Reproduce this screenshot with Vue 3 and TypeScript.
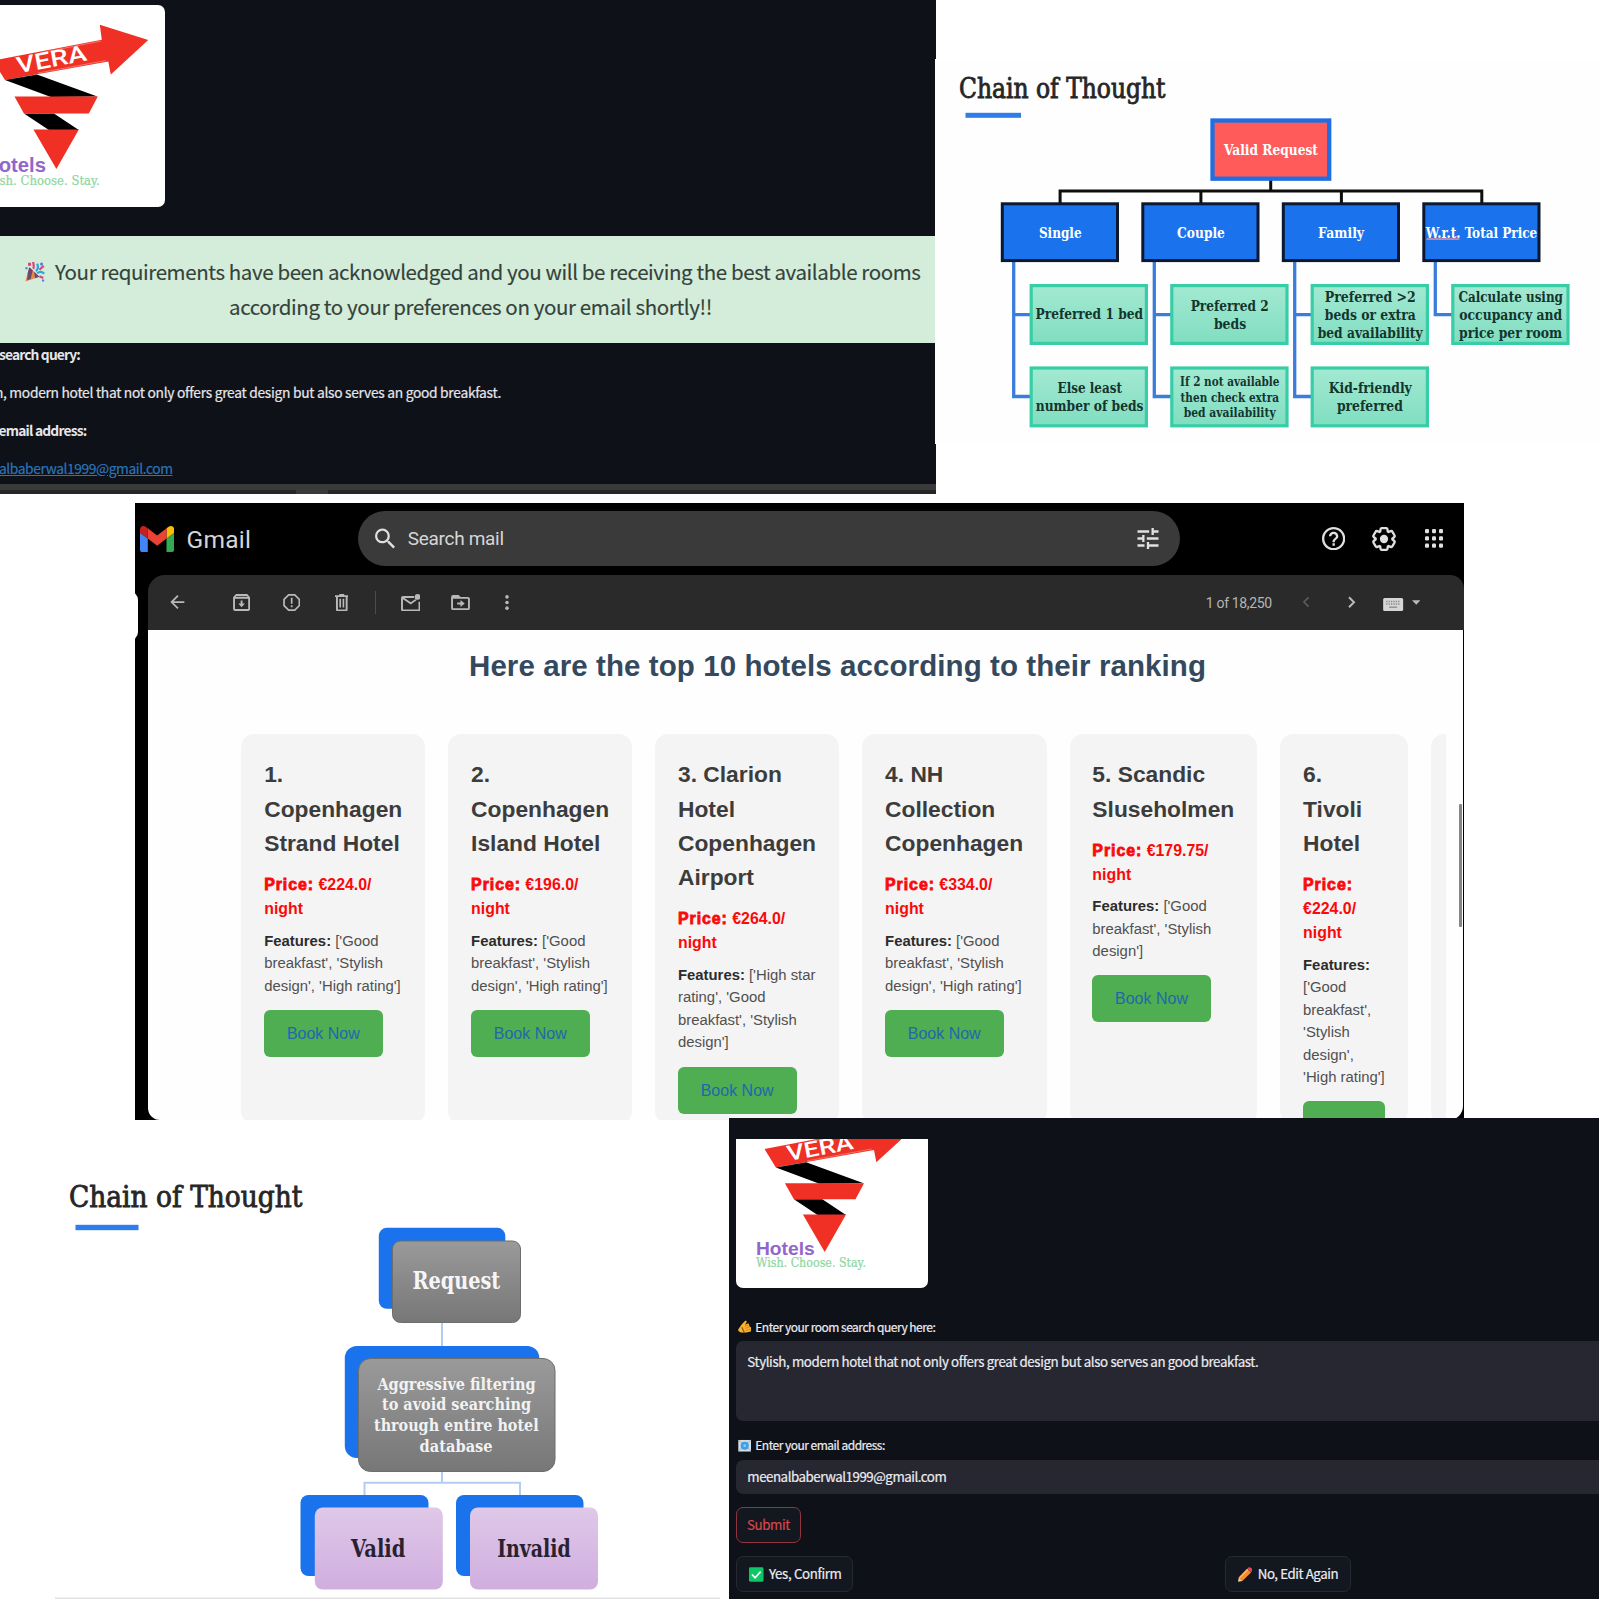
<script setup lang="ts">
interface Label { t: string; x: number; w: number; y: number; s?: number; c?: string }
interface Box { x: number; y: number; w: number; h: number }
interface Hotel { name: string; price: string; features: string; wide: number; action: string }

/* Spreads an element's letters so that the line takes a given width in pixels. */
const vFit = {
  mounted(el: HTMLElement, binding: { value: number }) {
    const count = (el.textContent ?? '').trim().length
    const natural = el.getBoundingClientRect().width
    el.style.letterSpacing = `${(binding.value - natural) / count}px`
  },
}

const hotels: Hotel[] = [
  { name: '1.\nCopenhagen\nStrand Hotel', price: ' €224.0/\nnight', features: " ['Good\nbreakfast', 'Stylish\ndesign', 'High rating']", wide: 183.9, action: 'Book Now' },
  { name: '2.\nCopenhagen\nIsland Hotel', price: ' €196.0/\nnight', features: " ['Good\nbreakfast', 'Stylish\ndesign', 'High rating']", wide: 183.9, action: 'Book Now' },
  { name: '3. Clarion\nHotel\nCopenhagen\nAirport', price: ' €264.0/\nnight', features: " ['High star\nrating', 'Good\nbreakfast', 'Stylish\ndesign']", wide: 184.1, action: 'Book Now' },
  { name: '4. NH\nCollection\nCopenhagen', price: ' €334.0/\nnight', features: " ['Good\nbreakfast', 'Stylish\ndesign', 'High rating']", wide: 184.3, action: 'Book Now' },
  { name: '5. Scandic\nSluseholmen', price: ' €179.75/\nnight', features: " ['Good\nbreakfast', 'Stylish\ndesign']", wide: 187.7, action: 'Book Now' },
  { name: '6.\nTivoli\nHotel', price: '\n€224.0/\nnight', features: "\n['Good\nbreakfast',\n'Stylish\ndesign',\n'High rating']", wide: 127.6, action: '' },
]

const categories: Box[] = [1000.500, 1141, 1281.500, 1422].map((x) => ({ x: x + 1.3, y: 203.8, w: 115.2, h: 56.8 }))
const rules: Box[] = [
  ...[1029, 1169.600, 1310, 1450.600].map((x) => ({ x: x + 1.7, y: 285.6, w: 115.2, h: 57.8 })),
  ...[1029, 1169.600, 1310].map((x) => ({ x: x + 1.7, y: 368, w: 115.2, h: 57.8 })),
]
const ink = '#14352e'
const ruleLabels: Label[] = [
  { t: 'Valid Request', x: 1223.5, w: 94, y: 155.2, c: '#fff' },
  { t: 'Single', x: 1038.4, w: 42.7, y: 237.6, c: '#fff' },
  { t: 'Couple', x: 1176.6, w: 47.8, y: 237.6, c: '#fff' },
  { t: 'Family', x: 1317.6, w: 46, y: 237.6, c: '#fff' },
  { t: 'W.r.t. Total Price', x: 1425.3, w: 111.5, y: 237.6, c: '#fff' },
  { t: 'Preferred 1 bed', x: 1035, w: 107.5, y: 319.2, c: ink },
  { t: 'Preferred 2', x: 1190.2, w: 78, y: 310.6, c: ink },
  { t: 'beds', x: 1213.4, w: 32.3, y: 328.6, c: ink },
  { t: 'Preferred >2', x: 1324.3, w: 91, y: 301.6, c: ink },
  { t: 'beds or extra', x: 1324.3, w: 91, y: 319.6, c: ink },
  { t: 'bed availability', x: 1317.2, w: 105, y: 337.6, c: ink },
  { t: 'Calculate using', x: 1458, w: 104.5, y: 301.6, c: ink },
  { t: 'occupancy and', x: 1458.8, w: 102.8, y: 319.6, c: ink },
  { t: 'price per room', x: 1458.6, w: 103, y: 337.6, c: ink },
  { t: 'Else least', x: 1057, w: 64.5, y: 393, c: ink },
  { t: 'number of beds', x: 1035.2, w: 107.8, y: 411, c: ink },
  { t: 'If 2 not available', x: 1179.6, w: 99.4, y: 386, s: 12.2, c: ink },
  { t: 'then check extra', x: 1180, w: 98.5, y: 401.6, s: 12.2, c: ink },
  { t: 'bed availability', x: 1183.2, w: 92, y: 417.2, s: 12.2, c: ink },
  { t: 'Kid-friendly', x: 1328.3, w: 83, y: 393, c: ink },
  { t: 'preferred', x: 1336.4, w: 66, y: 411, c: ink },
]

const filterLabels: Label[] = [
  { t: 'Request', x: 412.6, w: 87.6, y: 1288.6, s: 23.5, c: '#f6f6f6' },
  { t: 'Aggressive filtering', x: 377.4, w: 158.2, y: 1389.8, s: 16.5, c: '#f2f2f2' },
  { t: 'to avoid searching', x: 382, w: 149, y: 1410.4, s: 16.5, c: '#f2f2f2' },
  { t: 'through entire hotel', x: 374, w: 164.6, y: 1431, s: 16.5, c: '#f2f2f2' },
  { t: 'database', x: 419.6, w: 73, y: 1451.8, s: 16.5, c: '#f2f2f2' },
  { t: 'Valid', x: 351.1, w: 54.3, y: 1556.5, s: 24, c: '#2a2130' },
  { t: 'Invalid', x: 497.2, w: 73.5, y: 1556.5, s: 24, c: '#2a2130' },
]
</script>

<template>
  <main class="board">
    <svg class="defs" width="0" height="0" aria-hidden="true">
      <defs>
        <g id="vera-mark">
          <path fill="#f03024" d="M-7 60.500 102 39.500 100 24.500 148.500 40 111 74.500 108.500 61.500 5 80Z" />
          <path fill="#000" d="M5 80 37 74.500 97.500 96.500 51 97ZM24 113.500H54L79 130H49Z" />
          <path fill="#f03024" d="M14.500 96.500H98L89 113.500H24ZM33.500 129.500H79L56.500 169Z" />
          <path fill="none" stroke="#fff" stroke-width=".6" opacity=".55" d="M40 52.800 101 41M38 73 106 60.500" />
          <text class="vera" transform="translate(18 73.200) rotate(-10.500)" textLength="71" lengthAdjust="spacingAndGlyphs" font-size="22.500" fill="#fff">VERA</text>
          <text x="-16" y="172" textLength="62" lengthAdjust="spacingAndGlyphs" font-family="Liberation Sans, sans-serif" font-weight="700" font-size="20" fill="#9168c9">Hotels</text>
          <text x="-16" y="185.200" textLength="116" lengthAdjust="spacingAndGlyphs" font-family="DejaVu Serif, serif" font-size="13" fill="#8fd6a0" stroke="#8fd6a0" stroke-width=".25">Wish. Choose. Stay.</text>
        </g>
      </defs>
    </svg>

    <div class="top">
      <section class="ack">
        <svg class="logo-a" viewBox="0 5 165.5 201.5"><use href="#vera-mark" /></svg>
        <div class="banner">
          <div class="line">
            <svg class="party" viewBox="0 0 24 24">
              <path fill="#e8874a" d="M1 23.500 5.500 7 17 18z" />
              <path fill="#6b4a6e" d="M3.800 13 5.500 7l4 3.500L7 20.500l-4 1.500zM11 12l6 6-5 1.800z" />
              <path fill="none" stroke="#2aa7e0" stroke-width="2.600" d="M13 11.500c2.500-2 3-5 1.500-8.500M14.500 14c3-2.500 6-2 8 .5" />
              <path fill="none" stroke="#e0457b" stroke-width="2.600" d="M10 9c1.500-2.500 0-5 0-8M17 10l5-4.500M17 17.500l4.500 2" />
              <path fill="#e0457b" d="M4 2h3.500v3.500H4z" /><path fill="#4b7de0" d="M1 7h2.500v2.500H1zM18 2h3v3h-3zM20 21h2.500v2.500H20z" />
            </svg>
            <span v-fit="865.500">Your requirements have been acknowledged and you will be receiving the best available rooms</span>
          </div>
          <div class="line second"><span v-fit="483">according to your preferences on your email shortly!!</span></div>
        </div>
        <div class="facts">
          <div class="fact a"><b v-fit="81">search query:</b></div>
          <div class="fact b"><span v-fit="506">h, modern hotel that not only offers great design but also serves an good breakfast.</span></div>
          <div class="fact c"><b v-fit="88">email address:</b></div>
          <div class="fact d"><a v-fit="173.500">albaberwal1999@gmail.com</a></div>
        </div>
        <div class="taskbar"><i></i></div>
      </section>

      <svg class="slide-a" viewBox="934.5 59 664.5 385">
        <defs>
          <linearGradient id="mint" x1="0" y1="0" x2="0" y2="1"><stop offset="0" stop-color="#a3e9d2" /><stop offset="1" stop-color="#80dec0" /></linearGradient>
        </defs>
        <text x="958.500" y="98" textLength="206.500" lengthAdjust="spacingAndGlyphs" class="title" font-size="27">Chain of Thought</text>
        <rect x="965" y="112.800" width="55.500" height="5" fill="#2f7de8" />
        <path fill="none" stroke="#0d0d0d" stroke-width="3" d="M1270.200 180V191M1059.600 204V190.900H1481.300V204M1200.400 191V204M1340.900 191V204" />
        <path fill="none" stroke="#3b7ddd" stroke-width="3.300" d="M1013.200 260V396.500H1031M1013.200 314.700H1031M1153.800 260V396.500H1171M1153.800 314.700H1171M1294.200 260V396.500H1312M1294.200 314.700H1312M1434.800 260V314.700H1453" />
        <rect x="1212" y="120.500" width="116.700" height="58.200" fill="#ff5b5b" stroke="#1f6fe2" stroke-width="4.300" />
        <rect v-for="b in categories" :key="b.x" :x="b.x" :y="b.y" :width="b.w" :height="b.h" fill="#1a73ec" stroke="#0b1830" stroke-width="3" />
        <rect v-for="(b, i) in rules" :key="i" :x="b.x" :y="b.y" :width="b.w" :height="b.h" fill="url(#mint)" stroke="#37cda6" stroke-width="3.200" />
        <text v-for="(l, i) in ruleLabels" :key="'l' + i" class="label" :x="l.x" :y="l.y" :textLength="l.w" lengthAdjust="spacingAndGlyphs" :font-size="l.s ?? 14.8" :fill="l.c">{{ l.t }}</text>
        <rect x="1426" y="238.300" width="33" height="1.500" fill="#f08a9a" />
      </svg>
    </div>

    <section class="gmail">
      <i class="notch"></i>
      <header class="bar">
        <svg class="g-logo" viewBox="52 42 88 66" preserveAspectRatio="none">
          <path fill="#4285f4" d="M58 108h14V74L52 59v43c0 3.320 2.690 6 6 6" />
          <path fill="#34a853" d="M120 108h14c3.320 0 6-2.690 6-6V59l-20 15" />
          <path fill="#fbbc04" d="M120 48v26l20-15v-8c0-7.420-8.470-11.650-14.400-7.200" />
          <path fill="#ea4335" d="M72 74V48l24 18 24-18v26L96 92" />
          <path fill="#c5221f" d="M52 51v8l20 15V48l-5.600-4.200c-5.940-4.450-14.400-.22-14.400 7.200" />
        </svg>
        <div class="g-name"><span v-fit="64.500">Gmail</span></div>
        <div class="search">
          <svg class="ic-search" viewBox="3 3 17.5 17.5"><path d="M15.500 14h-.79l-.28-.27A6.470 6.470 0 0 0 16 9.500 6.500 6.500 0 1 0 9.500 16c1.610 0 3.090-.59 4.230-1.570l.27.28v.79l5 4.990L20.490 19l-4.990-5zm-6 0C7.010 14 5 11.990 5 9.500S7.010 5 9.500 5 14 7.010 14 9.500 11.990 14 9.500 14z" /></svg>
          <span v-fit="96" class="search-text">Search mail</span>
          <svg class="ic-tune" viewBox="3 3 18 18"><path d="M3 17v2h6v-2H3zM3 5v2h10V5H3zm10 16v-2h8v-2h-8v-2h-2v6h2zM7 9v2H3v2h4v2h2V9H7zm14 4v-2H11v2h10zm-6-4h2V7h4V5h-4V3h-2v6z" /></svg>
        </div>
        <svg class="ic-help" viewBox="2 2 20 20"><path d="M11 18h2v-2h-2v2zm1-16C6.480 2 2 6.480 2 12s4.480 10 10 10 10-4.480 10-10S17.520 2 12 2zm0 18c-4.410 0-8-3.590-8-8s3.590-8 8-8 8 3.590 8 8-3.590 8-8 8zm0-14c-2.210 0-4 1.790-4 4h2c0-1.100.9-2 2-2s2 .9 2 2c0 2-3 1.750-3 5h2c0-2.250 3-2.500 3-5 0-2.210-1.790-4-4-4z" /></svg>
        <svg class="ic-gear" viewBox="0.8 0.7 22.4 22.6"><path fill="none" stroke="#e0e0e0" stroke-width="2.200" d="M13.850 22.250h-3.700c-.74 0-1.360-.54-1.450-1.270l-.27-1.890c-.27-.14-.53-.29-.79-.46l-1.800.72c-.7.26-1.470-.03-1.810-.65L2.200 15.530c-.35-.66-.2-1.440.36-1.880l1.530-1.190c-.01-.15-.02-.3-.02-.46 0-.15.01-.31.02-.46l-1.520-1.190c-.59-.45-.74-1.260-.37-1.880l1.850-3.190c.34-.62 1.110-.9 1.790-.63l1.810.73c.26-.17.52-.32.78-.46l.27-1.910c.09-.7.71-1.250 1.440-1.250h3.700c.74 0 1.360.54 1.450 1.270l.27 1.890c.27.14.53.29.79.46l1.800-.72c.71-.26 1.480.03 1.820.65l1.840 3.180c.36.66.2 1.440-.36 1.880l-1.520 1.190c.01.15.02.3.02.46s-.01.31-.02.46l1.520 1.190c.56.45.72 1.230.37 1.860l-1.860 3.220c-.34.62-1.110.9-1.800.63l-1.800-.72c-.26.17-.52.32-.78.46l-.27 1.910c-.1.68-.72 1.220-1.460 1.220z" /><circle cx="12" cy="12" r="3.900" /></svg>
        <svg class="ic-apps" viewBox="0 0 18 19"><g v-for="r in 3" :key="r"><rect v-for="c in 3" :key="c" :x="(c - 1) * 7" :y="(r - 1) * 7.2" width="4" height="4.300" rx="1.200" /></g></svg>
      </header>

      <div class="tools">
        <svg class="t1" viewBox="4 4 16 16"><path d="M20 11H7.830l5.590-5.590L12 4l-8 8 8 8 1.410-1.410L7.830 13H20v-2z" /></svg>
        <svg class="t2" viewBox="0 0 18 18"><path fill-rule="evenodd" d="M3 0h12l3 3.500V16a2 2 0 0 1-2 2H2a2 2 0 0 1-2-2V3.500zM2 5v11h14V5zM8 7h2v3h2.500L9 14l-3.500-4H8zM3 2h12v1H3z" /></svg>
        <svg class="t3" viewBox="0 0 20 20"><path fill-rule="evenodd" d="M6 0h8l6 6v8l-6 6H6l-6-6V6zM6.800 2 2 6.800v6.400L6.800 18h6.400l4.800-4.800V6.800L13.200 2zM9 4.500h2v7H9zM9 13.200h2v2.300H9z" /></svg>
        <svg class="t4" viewBox="0 0 14 18"><path fill-rule="evenodd" d="M4.500 0h5v1.200H14v2h-1V16a2 2 0 0 1-2 2H3a2 2 0 0 1-2-2V3.200H0v-2h4.500zM3 3.200V16h8V3.200zM4.500 5h1.700v9H4.500zM7.800 5h1.700v9H7.800z" /></svg>
        <i class="sep"></i>
        <svg class="t5" viewBox="0 0 20 18"><path fill-rule="evenodd" d="M2 2h11.500a4 4 0 0 0 0 2H3.500L10 8.500l4.500-3 1.500 1-6 4.200-8-5.200V16h16V8h2v8a2 2 0 0 1-2 2H2a2 2 0 0 1-2-2V4a2 2 0 0 1 2-2z" /><circle cx="17" cy="3" r="3" /></svg>
        <svg class="t6" viewBox="0 0 20 16"><path fill-rule="evenodd" d="M2 0h6l2 2h8a2 2 0 0 1 2 2v10a2 2 0 0 1-2 2H2a2 2 0 0 1-2-2V2a2 2 0 0 1 2-2zM2 4v10h16V4zM10 5.200 14.500 9 10 12.800V10H6.500V8H10z" /></svg>
        <svg class="t7" viewBox="0 0 4 16"><circle cx="2" cy="2" r="1.900" /><circle cx="2" cy="8" r="1.900" /><circle cx="2" cy="14" r="1.900" /></svg>
        <span class="count"><span v-fit="66">1 of 18,250</span></span>
        <svg class="t8" viewBox="0 0 8 12"><path fill="none" stroke="#5c5c5c" stroke-width="1.700" d="M7 1 2 6l5 5" /></svg>
        <svg class="t9" viewBox="0 0 8 12"><path fill="none" stroke="#b9b9b9" stroke-width="2" d="m1 1 5 5-5 5" /></svg>
        <svg class="t10" viewBox="0 0 20 13"><rect width="20" height="13" rx="1.500" fill="#d5d5d5" /><path stroke="#8a8a8a" stroke-width="1.300" stroke-dasharray="1.300 1.100" d="M3 3.500h14M3 6h14" /><path stroke="#8a8a8a" stroke-width="1.300" d="M6 9.200h8" /></svg>
        <svg class="t11" viewBox="0 0 9 5"><path d="M0 0h9L4.500 5z" /></svg>
      </div>

      <div class="mail">
        <i class="thumb"></i>
        <h1><span v-fit="737">Here are the top 10 hotels according to their ranking</span></h1>
        <div class="cards">
          <article v-for="h in hotels" :key="h.name" class="card" :style="{ width: h.wide + 'px' }">
            <h3>{{ h.name }}</h3>
            <p class="price"><strong>Price:</strong>{{ h.price }}</p>
            <p class="features"><b>Features:</b>{{ h.features }}</p>
            <div class="book">{{ h.action }}</div>
          </article>
          <article class="card last"></article>
        </div>
      </div>
    </section>

    <div class="bottom">
      <svg class="slide-b" viewBox="0 1118 729 481">
        <defs>
          <linearGradient id="gray" x1="0" y1="0" x2="0" y2="1"><stop offset="0" stop-color="#9a9a9a" /><stop offset="1" stop-color="#777" /></linearGradient>
          <linearGradient id="lilac" x1="0" y1="0" x2="0" y2="1"><stop offset="0" stop-color="#dfc8e8" /><stop offset="1" stop-color="#d0aedf" /></linearGradient>
        </defs>
        <text x="69" y="1207.300" textLength="233.500" lengthAdjust="spacingAndGlyphs" class="title" font-size="29.500">Chain of Thought</text>
        <rect x="75.500" y="1224.800" width="63" height="5.400" fill="#2f7de8" />
        <path fill="none" stroke="#b3cdf2" stroke-width="2" d="M442 1320V1348M442 1470V1482.800M364.500 1496V1482.800H520V1496" />
        <g fill="#1a73ec">
          <rect x="378.800" y="1227.800" width="126.500" height="81" rx="8" />
          <rect x="344.800" y="1346" width="194.500" height="112" rx="12" />
          <rect x="300.500" y="1495" width="128" height="81" rx="8" />
          <rect x="456" y="1495" width="127.500" height="81" rx="8" />
        </g>
        <g fill="url(#gray)" stroke="#6d6d6d" stroke-width="1">
          <rect x="392.500" y="1241" width="128" height="81.500" rx="8" />
          <rect x="358.500" y="1358.500" width="196.500" height="113" rx="12" />
        </g>
        <g fill="url(#lilac)">
          <rect x="314.800" y="1507.500" width="128" height="82" rx="8" />
          <rect x="470" y="1507.500" width="128" height="82" rx="8" />
        </g>
        <text v-for="(l, i) in filterLabels" :key="i" class="label" :x="l.x" :y="l.y" :textLength="l.w" lengthAdjust="spacingAndGlyphs" :font-size="l.s" :fill="l.c">{{ l.t }}</text>
        <rect x="55" y="1597.500" width="665" height="1.500" fill="#e2e2e2" />
      </svg>

      <section class="form">
        <svg class="logo-b" viewBox="-37 49.900 202.400 157.600"><use href="#vera-mark" /></svg>
        <label class="field-label">
          <svg viewBox="0 0 14 14"><path fill="#fbb42c" d="M.3 9.500 4 4.500 7.500.8Q9.200.3 9 2L7.300 4.800 10 3.700q1.700-.2 1.500 1.200l.5 2q1.800.2 1.500 1.500l.2 2q0 1.600-1.500 1.800l-3.700.8H3L.3 11.500z" /><path fill="none" stroke="#d97a12" stroke-width=".9" d="m7 6.500 4-1.300M7.500 8.800l4.500-1.600M8 11l5-1.300" /><path fill="#8a5a2a" d="m3.500 8 1-1L7 12.500l-1.200.5z" /></svg>
          <span v-fit="180">Enter your room search query here:</span>
        </label>
        <div class="input area"><span v-fit="511">Stylish, modern hotel that not only offers great design but also serves an good breakfast.</span></div>
        <label class="field-label second-label">
          <svg viewBox="0 0 14 14"><path fill="#d3dbe3" d="M.3 1h13.400v12H.3z" /><path fill="none" stroke="#9fb2c4" d="m.5 12.500 5-5M13.500 12.500l-5-5M1 1.500l6 5 6-5" /><circle cx="7" cy="7" r="4.200" fill="#3b9fe6" /><circle cx="7" cy="7" r="1.500" fill="#8accf5" /></svg>
          <span v-fit="129.500">Enter your email address:</span>
        </label>
        <div class="input mailbox"><span v-fit="199">meenalbaberwal1999@gmail.com</span></div>
        <div class="button submit"><span v-fit="43">Submit</span></div>
        <div class="choices">
          <div class="button yes">
            <svg viewBox="0 0 15 15"><rect width="15" height="15" rx="1.500" fill="#0bc765" /><path fill="none" stroke="#fff" stroke-width="1.700" d="m3 7.500 3.300 3.300L12 4.500" /></svg>
            <span v-fit="72.500">Yes, Confirm</span>
          </div>
          <div class="button no">
            <svg viewBox="0 0 15 15"><path fill="#f58b2e" d="M.8 10.500 9.500 1.500l4 4-9 8.800z" /><path fill="#ffb257" d="M.8 10.500 9.500 1.500l1.300 1.300-8.800 9z" /><path fill="#e0476e" d="m9.700 1.300 1.500-1.200Q13 0 14.200 1.200t.6 2.500L13.600 5.200z" /><path fill="#f7d39a" d="M.8 10.500 0 15l4.500-.7z" /></svg>
            <span v-fit="80.500">No, Edit Again</span>
          </div>
        </div>
      </section>
    </div>
  </main>
</template>

<style>
body { margin: 0; background: #fff; }
</style>

<style scoped>
.board { width: 1599px; height: 1599px; overflow: hidden; background: #fff; font-family: "Liberation Sans", sans-serif; }
.board svg { display: block; flex: none; }
.board .defs { position: absolute; }
span, a, b { white-space: nowrap; }
.vera { font-family: Roboto, "Open Sans", sans-serif; font-weight: 500; }
.title { font-family: "DejaVu Serif Condensed", "DejaVu Serif", serif; fill: #262626; stroke: #262626; stroke-width: .8px; }
.label { font-family: "DejaVu Serif Condensed", "DejaVu Serif", serif; font-weight: 700; }

.top { display: flex; height: 494px; }
.ack { flex: none; width: 936px; height: 494px; display: flex; flex-direction: column; background: #0e1118; overflow: hidden; font-family: "Noto Sans CJK SC", "Noto Sans", sans-serif; }
.ack .logo-a { margin-top: 5px; width: 165.2px; height: 201.5px; background: #fff; border-radius: 0 7px 7px 0; }
.banner { flex: none; box-sizing: border-box; margin-top: 29.5px; height: 106.6px; padding-top: 17.6px; background: #d4edda; color: #35423a; font-size: 20.5px; }
.line { display: flex; align-items: center; height: 35px; line-height: 35px; padding-left: 24px; }
.line span { display: inline-block; -webkit-text-stroke: .15px #35423a; }
.second { padding-left: 229px; }
.party { width: 22px; height: 21px; margin-right: 9px; }
.facts { display: flex; flex-direction: column; gap: 16.1px; color: #e6e6ea; font-size: 13.8px; line-height: 22px; }
.fact { display: flex; justify-content: flex-end; height: 22px; }
.fact span { -webkit-text-stroke: .2px #e6e6ea; }
.fact.a { width: 80px; }
.fact.b { width: 501px; }
.fact.c { width: 86.5px; }
.fact.d { width: 172.5px; }
.fact a { color: #2c74b8; text-decoration: underline; -webkit-text-stroke: .2px #2c74b8; }
.taskbar { margin-top: auto; height: 4px; background: #262626; border-top: 6px solid #3a3a3a; }
.taskbar i { display: block; width: 32px; height: 4px; margin-left: 296px; background: #3a3a3a; }
.slide-a { width: 664.5px; height: 385px; margin: 59px 0 0 -1.5px; background: #fefefe; }

.gmail { position: relative; width: 1329px; height: 617px; margin: 9px 0 0 135px; background: #000; display: flex; flex-direction: column; overflow: hidden; }
.notch { position: absolute; left: -10px; top: 88px; width: 13px; height: 50px; border-radius: 0 9px 9px 0; background: #fff; }
.bar { display: flex; align-items: center; height: 71px; padding-bottom: 1px; fill: #e0e0e0; }
.g-logo { margin-left: 4.5px; width: 34.3px; height: 26px; }
.g-name { width: 64px; margin-left: 12.8px; font: 400 24.5px/30px Roboto, sans-serif; color: #d6d6d6; padding-top: 2px; }
.g-name span { display: inline-block; }
.search { display: flex; align-items: center; box-sizing: border-box; flex: none; width: 822.4px; height: 55.4px; margin-left: 107.4px; padding: 0 21px 0 16.6px; border-radius: 28px; background: #3a3a3a; }
.search-text { margin-left: 13.2px; padding-top: 1px; font: 400 19px/26px Roboto, sans-serif; color: #d6d6d6; }
.ic-search { width: 20px; height: 21px; }
.ic-tune { width: 22px; height: 21px; margin-left: auto; }
.ic-help { width: 23.3px; height: 23.3px; margin-left: 141.6px; }
.ic-gear { width: 24px; height: 24px; margin-left: 26.5px; }
.ic-apps { width: 18px; height: 19px; margin-left: 29px; }

.tools { display: flex; align-items: center; flex: none; height: 54.5px; margin-left: 13px; border-radius: 17px 14px 0 0; background: #2a2a2a; fill: #b9b9b9; }
.t1 { width: 14.7px; height: 14px; margin-left: 22.3px; }
.t2 { width: 17.2px; height: 17px; margin-left: 47.6px; }
.t3 { width: 17.4px; height: 17px; margin-left: 33px; }
.t4 { width: 13.6px; height: 17.5px; margin-left: 34.6px; }
.sep { width: 1px; height: 23px; margin-left: 26.4px; background: #4c4c4c; }
.t5 { width: 19.5px; height: 17.5px; margin-left: 25px; }
.t6 { width: 19px; height: 15px; margin-left: 30.5px; }
.t7 { width: 4px; height: 15px; margin-left: 35px; }
.count { width: 66px; margin-left: auto; padding-top: 1px; font: 400 14px/20px Roboto, sans-serif; color: #b5b5b5; }
.count span { display: inline-block; }
.t8 { width: 7.5px; height: 12px; margin-left: 30.6px; }
.t9 { width: 8px; height: 12.5px; margin-left: 38px; }
.t10 { width: 20.3px; height: 13px; margin: 4px 0 0 27.4px; }
.t11 { width: 8.5px; height: 5px; margin: 0 44px 0 7.9px; }

.mail { position: relative; flex: 1; margin: 0 1px 0 13px; border-radius: 0 0 14px 12px; background: #fefefe; overflow: hidden; }
.thumb { position: absolute; right: 1.5px; top: 174.5px; width: 2.5px; height: 123px; border-radius: 1px; background: #858585; }
h1 { margin: 18.6px 0 0 321px; font-size: 29.5px; line-height: 36px; height: 36px; color: #34495e; }
h1 span { display: inline-block; }
.cards { display: flex; gap: 23px; width: 1204.4px; height: 390px; margin: 50.4px 0 0 93.4px; overflow: hidden; }
.card { flex: none; box-sizing: border-box; padding: 22.7px 0 0 22.8px; border-radius: 13px; background: #f4f4f4; white-space: pre-line; }
.last { width: 60px; }
h3 { margin: 0; font-size: 22.8px; line-height: 34.4px; color: #3c3c3c; white-space: pre; }
.price { margin: 12.6px 0 0; font-size: 15.9px; line-height: 24.1px; font-weight: 700; color: #fa0a0a; white-space: pre; }
.price strong { letter-spacing: .95px; -webkit-text-stroke: .8px #fa0a0a; }
.features { margin: 8.4px 0 0; font-size: 14.87px; line-height: 22.5px; color: #505050; white-space: pre; }
.features b { color: #2c2c2c; }
.book { box-sizing: border-box; width: 118.6px; height: 47px; margin-top: 12.8px; padding-left: 22.7px; border-radius: 6px; background: #4fae51; color: #2267ad; font-size: 16px; line-height: 48px; }
.card:nth-child(6) .book { width: 82px; }

.bottom { position: relative; display: flex; height: 481px; margin-top: -2px; }
.slide-b { width: 729px; height: 481px; }
.form { flex: none; box-sizing: border-box; width: 870px; height: 481px; padding: 21px 0 0 7px; background: #0e1118; overflow: hidden; color: #ececf0; font-family: "Noto Sans CJK SC", "Noto Sans", sans-serif; font-size: 13.3px; }
.form span { display: inline-block; -webkit-text-stroke: .2px currentColor; }
.logo-b { width: 192px; height: 149.4px; background: #fff; border-radius: 0 0 7px 7px; }
.field-label { display: flex; align-items: center; height: 20px; margin-top: 28.3px; padding-left: 1.8px; font-size: 12px; line-height: 20px; }
.field-label svg { width: 13.5px; height: 13.5px; margin-right: 4px; }
.input { box-sizing: border-box; width: 880px; padding-left: 11.3px; border-radius: 7px; background: #262730; }
.area { height: 80px; margin-top: 4.2px; padding-top: 11px; line-height: 20px; }
.second-label { margin-top: 14.6px; }
.mailbox { height: 34.5px; margin-top: 4.1px; line-height: 34px; }
.button { display: flex; align-items: center; box-sizing: border-box; border: 1px solid #262932; border-radius: 7px; background: #131720; line-height: 20px; }
.submit { width: 65px; height: 36px; margin-top: 13.2px; padding-left: 10px; border-color: #93343c; color: #d3494d; }
.choices { display: flex; margin-top: 12.6px; }
.button svg { width: 14.5px; height: 15px; }
.yes { width: 117px; height: 36.5px; padding-left: 12px; gap: 5.5px; }
.no { width: 126px; height: 36.5px; margin-left: 372.2px; padding-left: 11.5px; gap: 5.5px; }
</style>
